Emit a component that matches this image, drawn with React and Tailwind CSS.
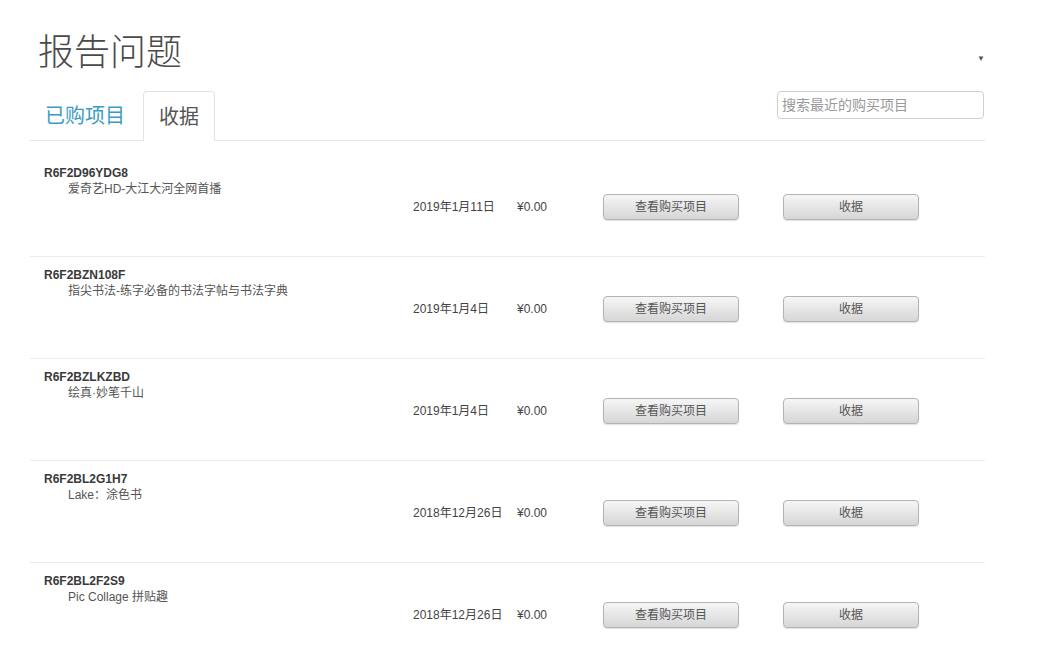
import React from 'react';

const FONT = { fontFamily: '"Liberation Sans", Arial, "Noto Sans CJK SC", sans-serif' };

const receipts = [
  { id: 'R6F2D96YDG8', name: '爱奇艺HD-大江大河全网首播', date: '2019年1月11日', price: '¥0.00' },
  { id: 'R6F2BZN108F', name: '指尖书法-练字必备的书法字帖与书法字典', date: '2019年1月4日', price: '¥0.00' },
  { id: 'R6F2BZLKZBD', name: '绘真·妙笔千山', date: '2019年1月4日', price: '¥0.00' },
  { id: 'R6F2BL2G1H7', name: 'Lake：涂色书', date: '2018年12月26日', price: '¥0.00' },
  { id: 'R6F2BL2F2S9', name: 'Pic Collage 拼贴趣', date: '2018年12月26日', price: '¥0.00' },
];

const GrayButton = ({ children }) => (
  <button className="w-[136px] h-[26px] rounded-[4px] border border-[#b4b4b4] bg-gradient-to-b from-[#f6f6f6] to-[#d6d6d6] text-[12px] text-[#555] shadow-[0_1px_1px_rgba(0,0,0,0.12)]">
    {children}
  </button>
);

const ReceiptRow = ({ item }) => (
  <div className="h-[102px] border-b border-[#ececec] pl-[14px] pt-[10px] flex">
    <div className="w-[369px] leading-[16px]">
      <div className="text-[12px] font-bold text-[#3a3a3a]">{item.id}</div>
      <div className="text-[12px] text-[#555] pl-[24px]">{item.name}</div>
    </div>
    <div className="flex items-center h-[26px] mt-[29px] text-[12px] text-[#444]">
      <div className="w-[104px]">{item.date}</div>
      <div className="w-[86px]">{item.price}</div>
      <GrayButton>查看购买项目</GrayButton>
      <div className="w-[44px]" />
      <GrayButton>收据</GrayButton>
    </div>
  </div>
);

export default function App() {
  return (
    <div className="w-[1057px] h-[661px] bg-white overflow-hidden relative" style={FONT}>
      <span className="absolute left-[977px] top-[53px] text-[8px] text-[#555]">▼</span>
      <div className="pl-[30px] w-[985px]">
        <h1 className="pt-[30px] pl-[8px] text-[36px] leading-[46px] font-extralight text-[#4a4a4a]">报告问题</h1>
        <div className="mt-[15px] flex items-end border-b border-[#e6e6e6] h-[50px]">
          <div className="h-[49px] flex items-center pl-[15px] pr-[18px] text-[20px] text-[#3d9cc5]">已购项目</div>
          <div className="h-[50px] -mb-px flex items-center text-[20px] text-[#555] bg-white border border-b-0 border-[#e3e3e3] rounded-t-[4px] w-[72px] justify-center">收据</div>
          <div className="flex-1" />
          <div className="self-start w-[207px] h-[28px] border border-[#cfcfcf] rounded-[4px] flex items-center px-[4px] text-[14px] text-[#999]">
            搜索最近的购买项目
          </div>
          <div className="w-[1px]" />
        </div>
        <div className="mt-[14px]">
          {receipts.map((r) => (
            <ReceiptRow key={r.id} item={r} />
          ))}
        </div>
      </div>
    </div>
  );
}
